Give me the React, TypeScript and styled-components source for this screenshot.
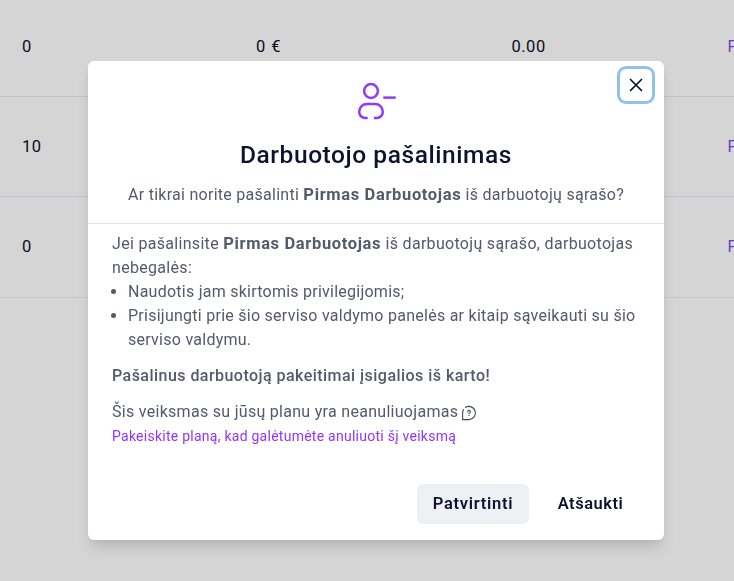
import React from 'react';
import styled, { createGlobalStyle } from 'styled-components';

const GlobalStyle = createGlobalStyle`
  *, *::before, *::after { box-sizing: border-box; }
  body {
    margin: 0;
    background: #d5d5d5;
    overflow: hidden;
    font-family: Roboto, 'Noto Sans', sans-serif;
    font-size: 16px;
    line-height: 24px;
  }
  h2, p, ul { margin: 0; padding: 0; }
  button { font-family: inherit; border: 0; cursor: pointer; }
`;

const Page = styled.div`
  height: 581px;
  overflow: hidden;
`;

const Table = styled.div`
  display: flex;
  flex-direction: column;
`;

const TableRow = styled.div<{ $last?: boolean }>`
  display: grid;
  grid-template-columns: 234px 255.5px 216px 60px;
  align-items: center;
  height: ${(p) => (p.$last ? 101 : 100)}px;
  padding: 0 0 ${(p) => (p.$last ? 1 : 0)}px 22px;
  border-bottom: 1px solid ${(p) => (p.$last ? '#c9c9cb' : '#c2c1d0')};
  color: #0b0d1c;
  &:first-child { height: 97px; padding-bottom: 3px; }
`;

const Cell = styled.span<{ $spacing?: number }>`
  font-size: 16.5px;
  letter-spacing: ${(p) => p.$spacing ?? 0.5}px;
  white-space: nowrap;
`;

const RowLink = styled.span`
  color: #6e39bd;
`;

const Overlay = styled.div`
  position: fixed;
  inset: 0;
  display: flex;
  align-items: flex-start;
  padding: 61px 0 0 88px;
`;

const Dialog = styled.section`
  position: relative;
  width: 576px;
  height: 479px;
  display: flex;
  flex-direction: column;
  background: #fff;
  border-radius: 6px;
  color: #525a6b;
  box-shadow: 0 10px 15px -3px rgba(0, 0, 0, 0.12), 0 4px 8px -2px rgba(0, 0, 0, 0.08);
`;

const Header = styled.header`
  display: flex;
  flex-direction: column;
  align-items: center;
  height: 163px;
  padding-top: 20px;
  border-bottom: 1px solid #e3e5e8;
`;

const UserMinusIcon = styled.svg`
  width: 40px;
  height: 40px;
  flex: none;
`;

const Title = styled.h2`
  margin-top: 16px;
  font-size: 24.5px;
  line-height: 36px;
  font-weight: 500;
  letter-spacing: 0.57px;
  color: #0b132f;
`;

const Text = styled.p<{ $spacing?: number; $gap?: number }>`
  margin-top: ${(p) => p.$gap ?? 0}px;
  letter-spacing: ${(p) => p.$spacing ?? 0.29}px;
  white-space: nowrap;
`;

const Strong = styled.strong`
  font-size: 16.5px;
  line-height: 1;
  font-weight: 700;
  letter-spacing: 0.64px;
`;

const Notice = styled(Text)`
  font-weight: 500;
`;

const CloseButton = styled.button`
  position: absolute;
  top: 8px;
  right: 12px;
  width: 32px;
  height: 32px;
  display: grid;
  place-items: center;
  padding: 0;
  background: #fff;
  border-radius: 6px;
  color: #0b132f;
  box-shadow: 0 0 0 3px #8fc3ed;
`;

const Body = styled.div`
  flex: 1;
  padding: 8px 24px 0;
`;

const List = styled.ul`
  padding-left: 16px;
  list-style: disc;
`;

const Item = styled.li<{ $spacing: number }>`
  letter-spacing: ${(p) => p.$spacing}px;
  white-space: nowrap;
`;

const HelpIcon = styled.svg`
  width: 16px;
  height: 16px;
  margin-left: 3px;
  vertical-align: -4px;
`;

const PlanLink = styled.a`
  display: block;
  font-size: 14px;
  letter-spacing: 0.255px;
  color: #9333ff;
  white-space: nowrap;
`;

const Footer = styled.footer`
  display: flex;
  justify-content: flex-end;
  gap: 12px;
  padding: 0 24px 16px;
`;

const Button = styled.button<{ $filled?: boolean }>`
  width: ${(p) => (p.$filled ? 112 : 99)}px;
  height: 40px;
  padding: 0;
  border-radius: 6px;
  background: ${(p) => (p.$filled ? '#eff0f3' : 'transparent')};
  color: #0b132f;
  font-size: 16.5px;
  font-weight: 600;
  line-height: 24px;
  letter-spacing: ${(p) => (p.$filled ? 0.72 : 0.5)}px;
`;

const rows = ['0', '10', '0'];

export default function App() {
  return (
    <Page>
      <GlobalStyle />
      <Table>
        {rows.map((value, i) => (
          <TableRow key={i} $last={i === rows.length - 1}>
            <Cell>{value}</Cell>
            <Cell $spacing={1}>0 €</Cell>
            <Cell>0.00</Cell>
            <RowLink>Peržiūrėti</RowLink>
          </TableRow>
        ))}
      </Table>
      <Overlay>
        <Dialog role="dialog" aria-modal="true">
          <Header>
            <UserMinusIcon viewBox="0 0 40 40" fill="none" stroke="#9139fb" strokeWidth="2.5">
              <circle cx="15" cy="10" r="6.900" />
              <path d="M11.700 37H9.200A6 6 0 0 1 3.200 31.000C3.200 26 6.700 23 11 23h8c4.300 0 7.800 3 7.800 8a6 6 0 0 1-6 6H18" />
              <path d="M27.300 16.600h12.400" />
            </UserMinusIcon>
            <Title>Darbuotojo pašalinimas</Title>
            <Text $gap={10} $spacing={0.27}>
              Ar tikrai norite pašalinti <Strong>Pirmas Darbuotojas</Strong> iš darbuotojų sąrašo?
            </Text>
          </Header>
          <CloseButton aria-label="Uždaryti">
            <svg width="14" height="14" viewBox="0 0 14 14" fill="none" stroke="currentColor" strokeWidth="1.7" strokeLinecap="round">
              <path d="M1.500 1.500l11 11M12.500 1.500l-11 11" />
            </svg>
          </CloseButton>
          <Body>
            <Text $spacing={0.31}>
              Jei pašalinsite <Strong>Pirmas Darbuotojas</Strong> iš darbuotojų sąrašo, darbuotojas
              <br />
              nebegalės:
            </Text>
            <List>
              <Item $spacing={0.245}>Naudotis jam skirtomis privilegijomis;</Item>
              <Item $spacing={0.26}>
                Prisijungti prie šio serviso valdymo panelės ar kitaip sąveikauti su šio
                <br />
                serviso valdymu.
              </Item>
            </List>
            <Notice $gap={12} $spacing={0.46}>Pašalinus darbuotoją pakeitimai įsigalios iš karto!</Notice>
            <Text $gap={12}>
              Šis veiksmas su jūsų planu yra neanuliuojamas
              <HelpIcon viewBox="0 0 16 16" fill="none" stroke="#3f4656" strokeWidth="1.1" strokeLinecap="round" strokeLinejoin="round">
                <path d="M4.500 2.300A6.600 6.600 0 1 1 8 14.600H1.600V8A6.600 6.600 0 0 1 2.500 4.600" />
                <path d="M6.700 6.700a1.300 1.300 0 1 1 2 1.100c-.5.300-.7.500-.7.900M8 10.400v.1" />
              </HelpIcon>
            </Text>
            <PlanLink>Pakeiskite planą, kad galėtumėte anuliuoti šį veiksmą</PlanLink>
          </Body>
          <Footer>
            <Button $filled>Patvirtinti</Button>
            <Button>Atšaukti</Button>
          </Footer>
        </Dialog>
      </Overlay>
    </Page>
  );
}
